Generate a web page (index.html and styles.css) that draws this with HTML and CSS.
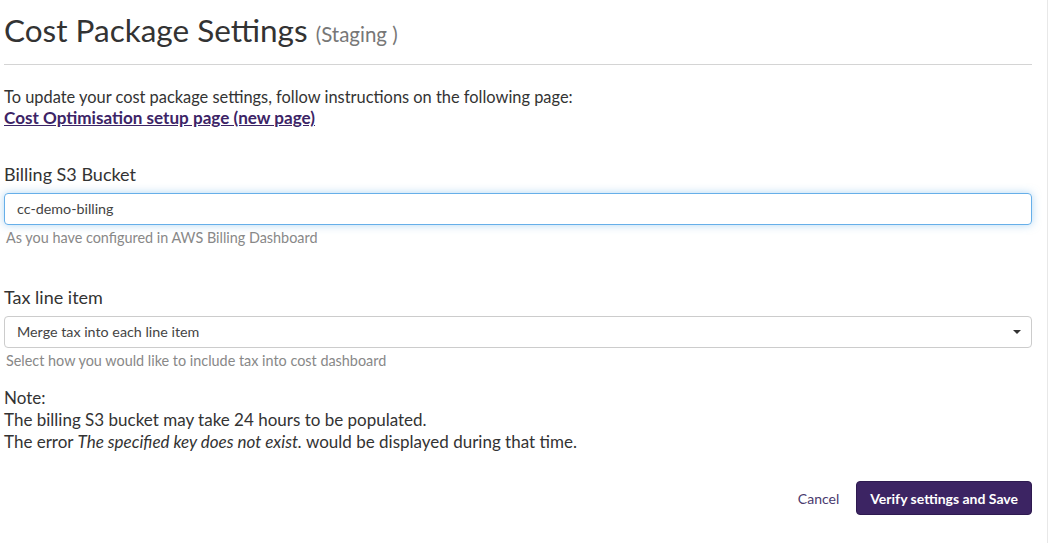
FILE: index.html
```html
<!DOCTYPE html>
<html>
<head>
<meta charset="utf-8">
<link rel="stylesheet" href="styles.css">
</head>
<body>
<div class="frame">
  <div class="page">
    <h1 class="title">Cost Package Settings <small class="env">(Staging )</small></h1>
    <hr class="rule">
    <p class="intro">To update your cost package settings, follow instructions on the following page:<br>
      <a class="link" href="#">Cost Optimisation setup page (new page)</a></p>

    <div class="field">
      <label class="label">Billing S3 Bucket</label>
      <div class="input focused">cc-demo-billing</div>
      <div class="help">As you have configured in AWS Billing Dashboard</div>
    </div>

    <div class="field field-tax">
      <label class="label">Tax line item</label>
      <div class="input select">
        <span>Merge tax into each line item</span>
        <span class="caret"></span>
      </div>
      <div class="help">Select how you would like to include tax into cost dashboard</div>
    </div>

    <div class="note">
      Note:<br>
      The billing S3 bucket may take 24 hours to be populated.<br>
      The error <em>The specified key does not exist.</em> would be displayed during that time.
    </div>

    <div class="actions">
      <a class="cancel" href="#">Cancel</a>
      <button class="btn">Verify settings and Save</button>
    </div>
  </div>
</div>
</body>
</html>
```

FILE: styles.css
```css
html, body {
  margin: 0;
  padding: 0;
  background: #fff;
}
body {
  font-family: Lato, "Open Sans", sans-serif;
  color: #333;
}
.frame {
  width: 1048px;
  height: 543px;
  border-right: 1px solid #e8e8e8;
  box-sizing: border-box;
}
.page {
  width: 1028px;
  margin-left: 4px;
  padding-top: 11px;
}
.title {
  margin: 0;
  font-size: 31.5px;
  font-weight: 400;
  line-height: 38px;
  color: #333;
}
.env {
  font-size: 20.5px;
  color: #777;
}
.rule {
  margin: 11px 0 0 0;
  border: 0;
  border-top: 1px solid #d4d4d4;
  height: 0;
}
.intro {
  margin: 21px 0 0 0;
  font-size: 16.4px;
  line-height: 21px;
}
.link {
  color: #3c2466;
  font-weight: 700;
  font-size: 17.1px;
  text-decoration: underline;
}
.field {
  margin-top: 34px;
}
.field-tax {
  margin-top: 38px;
}
.label {
  display: block;
  font-size: 18px;
  line-height: 24px;
  margin-bottom: 7px;
}
.input {
  height: 32px;
  box-sizing: border-box;
  border: 1px solid #ccc;
  border-radius: 4px;
  padding: 0 12px;
  font-size: 14.3px;
  line-height: 30px;
  color: #444;
  display: flex;
  align-items: center;
}
.focused {
  border-color: #66afe9;
  box-shadow: 0 0 8px rgba(102, 175, 233, 0.5);
}
.select {
  justify-content: space-between;
  padding-right: 10px;
}
.caret {
  width: 0;
  height: 0;
  border-left: 4px solid transparent;
  border-right: 4px solid transparent;
  border-top: 4px solid #333;
}
.help {
  margin: 4px 0 0 2px;
  font-size: 14.4px;
  line-height: 18px;
  color: #888;
}
.note {
  margin-top: 17px;
  font-size: 17px;
  line-height: 22px;
}
.actions {
  margin-top: 28px;
  display: flex;
  justify-content: flex-end;
  align-items: center;
  gap: 17px;
}
.cancel {
  color: #4a3a6e;
  font-size: 14px;
  text-decoration: none;
}
.btn {
  height: 34px;
  padding: 0 13px;
  background: #3c2463;
  color: #fff;
  border: 1px solid #2e1a50;
  border-radius: 4px;
  font-family: Lato, sans-serif;
  font-size: 14px;
  font-weight: 700;
}
```
